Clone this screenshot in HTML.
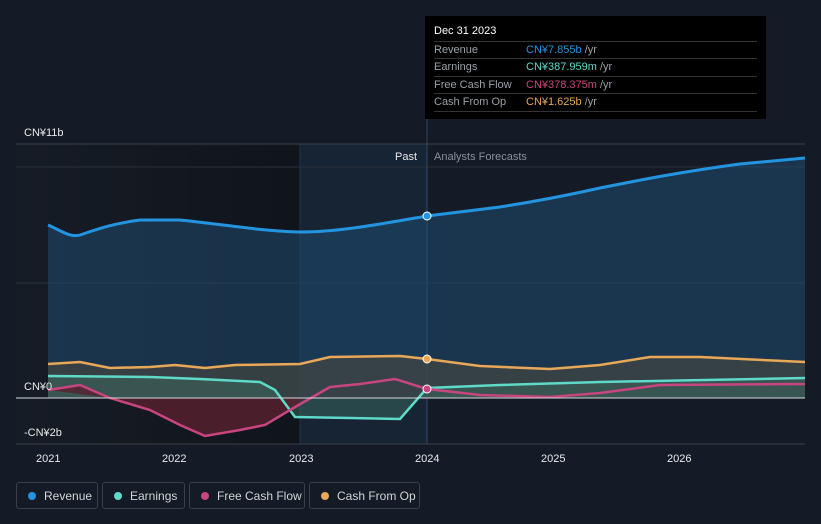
<!DOCTYPE html><html><head><style>
body{margin:0;background:#151b26;width:821px;height:524px;overflow:hidden;font-family:"Liberation Sans",sans-serif;}
.tt{position:absolute;left:425px;top:16px;width:341px;height:103px;background:#000;font-size:11px;color:#9aa0a8}
.tt .h{position:absolute;left:9px;top:9px;color:#fff;font-size:11px}
.tt .r{position:absolute;left:9px;width:323px;height:17px;border-top:1px solid #333;line-height:17px}
.tt .r b{position:absolute;left:92px;font-weight:normal}
.tt .r i{font-style:normal;color:#9aa0a8}
.lg{position:absolute;top:482px;height:27px;border:1px solid #3a3f48;border-radius:3px;color:#d0d3d8;font-size:12px;line-height:27px;box-sizing:border-box}
.lg span{position:absolute;left:11px;top:9px;width:8px;height:8px;border-radius:50%}
.lg em{font-style:normal;position:absolute;left:27px}
</style></head><body>
<svg width="821" height="524" style="position:absolute;left:0;top:0">
<defs><linearGradient id="lf" x1="0" x2="1"><stop offset="0" stop-color="#161c26"/><stop offset="1" stop-color="#10141b"/></linearGradient></defs>
<rect x="16" y="144" width="284" height="300" fill="url(#lf)"/>
<rect x="300" y="144" width="127" height="300" fill="#17283a" opacity="0.7"/>
<line x1="16" y1="144" x2="805" y2="144" stroke="#3a3f48"/>
<line x1="16" y1="167" x2="805" y2="167" stroke="#2a303a"/>
<line x1="16" y1="283" x2="805" y2="283" stroke="#2a303a"/>
<line x1="16" y1="444" x2="805" y2="444" stroke="#3a3f48"/>
<line x1="427" y1="119" x2="427" y2="444" stroke="#2d4a66"/>
<line x1="300" y1="144" x2="300" y2="444" stroke="#1f3447"/>
<path d="M48,225 C60,230 70,238 80,235 C95,230 110,224 140,220 L180,220 C220,224 260,231 300,232 C340,232 380,224 427,216 L500,207 C530,202 550,199 600,188 C640,180 680,172 740,164 L805,158 L805,398 L48,398Z" fill="#1f4a70" opacity="0.55"/>
<path d="M48,364 L80,362 L110,368 L150,367 L175,365 L205,368 L235,365 L300,364 L330,357 L400,356 L427,359 L480,366 L550,369 L600,365 L650,357 L700,357 L805,362 L805,398 L48,398Z" fill="#4a4a40" opacity="0.6"/>
<path d="M48,376 L150,377 L200,379 L260,382 L275,390 L295,417 L350,418 L400,419 L427,388 L500,385 L600,382 L805,378 L805,398 L48,398Z" fill="#3a6a60" opacity="0.5"/>
<path d="M48,390 L80,385 L110,398 L150,410 L180,425 L205,436 L240,430 L265,425 L290,410 L305,398 L110,398Z" fill="#5a2030" opacity="0.8"/>
<path d="M48,225 C60,230 70,238 80,235 C95,230 110,224 140,220 L180,220 C220,224 260,231 300,232 C340,232 380,224 427,216 L500,207 C530,202 550,199 600,188 C640,180 680,172 740,164 L805,158" fill="none" stroke="#2394df" stroke-width="3"/>
<path d="M48,364 L80,362 L110,368 L150,367 L175,365 L205,368 L235,365 L300,364 L330,357 L400,356 L427,359 L480,366 L550,369 L600,365 L650,357 L700,357 L805,362" fill="none" stroke="#e9a858" stroke-width="2.5"/>
<path d="M48,376 L150,377 L200,379 L260,382 L275,390 L295,417 L350,418 L400,419 L427,388 L500,385 L600,382 L805,378" fill="none" stroke="#5fd9c9" stroke-width="2.5"/>
<path d="M48,390 L80,385 L110,398 L150,410 L180,425 L205,436 L240,430 L265,425 L290,410 L330,387 L360,384 L395,379 L427,389 L480,395 L550,397 L600,393 L660,385 L805,384" fill="none" stroke="#c9457f" stroke-width="2.5"/>
<line x1="16" y1="398" x2="805" y2="398" stroke="#d8d8dc" stroke-width="1"/>
<circle cx="427" cy="216" r="4" fill="#2394df" stroke="#fff"/>
<circle cx="427" cy="359" r="4" fill="#e9a858" stroke="#fff"/>
<circle cx="427" cy="389" r="4" fill="#c9457f" stroke="#fff"/>
<g font-size="11" fill="#e6e8eb" font-family="Liberation Sans">
<text x="24" y="136">CN¥11b</text><text x="24" y="390">CN¥0</text><text x="24" y="436">-CN¥2b</text>
<text x="395" y="160">Past</text><text x="434" y="160" fill="#8a9099">Analysts Forecasts</text>
<text x="36" y="462">2021</text><text x="162" y="462">2022</text><text x="289" y="462">2023</text><text x="415" y="462">2024</text><text x="541" y="462">2025</text><text x="667" y="462">2026</text>
</g></svg>
<div class="tt"><div class="h">Dec 31 2023</div>
<div class="r" style="top:25px">Revenue<b style="color:#2394df">CN¥7.855b <i>/yr</i></b></div>
<div class="r" style="top:42px">Earnings<b style="color:#5fd9c9">CN¥387.959m <i>/yr</i></b></div>
<div class="r" style="top:60px">Free Cash Flow<b style="color:#c9457f">CN¥378.375m <i>/yr</i></b></div>
<div class="r" style="top:77px">Cash From Op<b style="color:#e9a858">CN¥1.625b <i>/yr</i></b></div>
<div class="r" style="top:95px;height:0"></div></div>
<div class="lg" style="left:16px;width:82px"><span style="background:#2394df"></span><em>Revenue</em></div>
<div class="lg" style="left:102px;width:83px"><span style="background:#5fd9c9"></span><em>Earnings</em></div>
<div class="lg" style="left:189px;width:116px"><span style="background:#c9457f"></span><em>Free Cash Flow</em></div>
<div class="lg" style="left:309px;width:111px"><span style="background:#e9a858"></span><em>Cash From Op</em></div>
</body></html>
